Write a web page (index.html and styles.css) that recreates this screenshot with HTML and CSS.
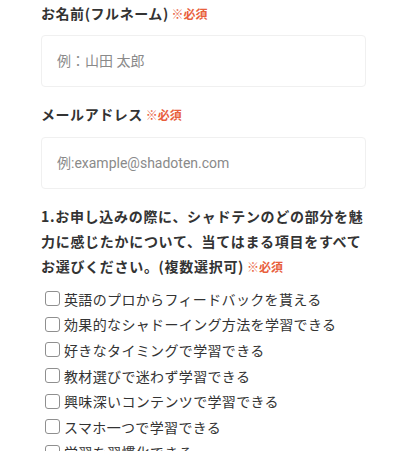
FILE: index.html
```html
<!DOCTYPE html>
<html lang="ja">
<head>
<meta charset="utf-8">
<link rel="stylesheet" href="styles.css">
</head>
<body>
<form class="form">
  <div class="field">
    <label class="label">お名前(フルネーム) <span class="req">※必須</span></label>
    <input class="text-input" type="text" placeholder="例：山田 太郎">
  </div>
  <div class="field field-mail">
    <label class="label">メールアドレス <span class="req">※必須</span></label>
    <input class="text-input" type="text" placeholder="例:example@shadoten.com">
  </div>
  <div class="field field-q">
    <p class="question">1.お申し込みの際に、シャドテンのどの部分を魅力に感じたかについて、当てはまる項目をすべてお選びください。(複数選択可) <span class="req">※必須</span></p>
    <ul class="checks">
      <li><label class="check"><input type="checkbox" class="box"><span>英語のプロからフィードバックを貰える</span></label></li>
      <li><label class="check"><input type="checkbox" class="box"><span>効果的なシャドーイング方法を学習できる</span></label></li>
      <li><label class="check"><input type="checkbox" class="box"><span>好きなタイミングで学習できる</span></label></li>
      <li><label class="check"><input type="checkbox" class="box"><span>教材選びで迷わず学習できる</span></label></li>
      <li><label class="check"><input type="checkbox" class="box"><span>興味深いコンテンツで学習できる</span></label></li>
      <li><label class="check"><input type="checkbox" class="box"><span>スマホ一つで学習できる</span></label></li>
      <li><label class="check"><input type="checkbox" class="box"><span>学習を習慣化できる</span></label></li>
    </ul>
  </div>
</form>
</body>
</html>
```
FILE: styles.css
```css
html, body {
  margin: 0;
  padding: 0;
  background: #fff;
}
body {
  font-family: "Noto Sans CJK JP", "Noto Sans", sans-serif;
  color: #333;
  overflow: hidden;
  height: 451px;
}
.form {
  padding: 1px 41px 0 41px;
  width: 325px;
}
.field {
  display: flex;
  flex-direction: column;
}
.label {
  font-size: 14px;
  font-weight: 700;
  letter-spacing: 0.04em;
  line-height: 24px;
  margin-bottom: 9px;
}
.req {
  color: #e8603c;
  font-size: 12px;
  font-weight: 700;
  letter-spacing: 0;
  margin-left: -1px;
}
.text-input {
  box-sizing: border-box;
  width: 325px;
  height: 52px;
  margin: 0;
  border: 1px solid #f0f0f0;
  border-radius: 4px;
  padding: 0 15px;
  font-family: Roboto, "Noto Sans CJK JP", sans-serif;
  font-size: 14px;
  color: #333;
  background: #fff;
  outline: none;
}
.text-input::placeholder {
  color: #8a8a8a;
}
.field-mail {
  margin-top: 15px;
}
.field-mail .label {
  margin-bottom: 10px;
}
.field-q {
  margin-top: 15px;
}
.question {
  margin: 0;
  font-size: 14px;
  font-weight: 700;
  letter-spacing: 0.05em;
  line-height: 25px;
}
.checks {
  list-style: none;
  margin: 7px 0 0 0;
  padding: 0;
}
.checks li {
  height: 25.6px;
  display: flex;
  align-items: center;
}
.check {
  display: flex;
  align-items: center;
  font-size: 14px;
  font-weight: 400;
  letter-spacing: 0.35px;
  color: #333;
  line-height: 20px;
}
.box {
  appearance: none;
  -webkit-appearance: none;
  box-sizing: border-box;
  width: 15px;
  height: 15px;
  margin: 0 4px 0 4px;
  border: 1px solid #8f8f8f;
  border-radius: 3px;
  background: #fff;
}
```
